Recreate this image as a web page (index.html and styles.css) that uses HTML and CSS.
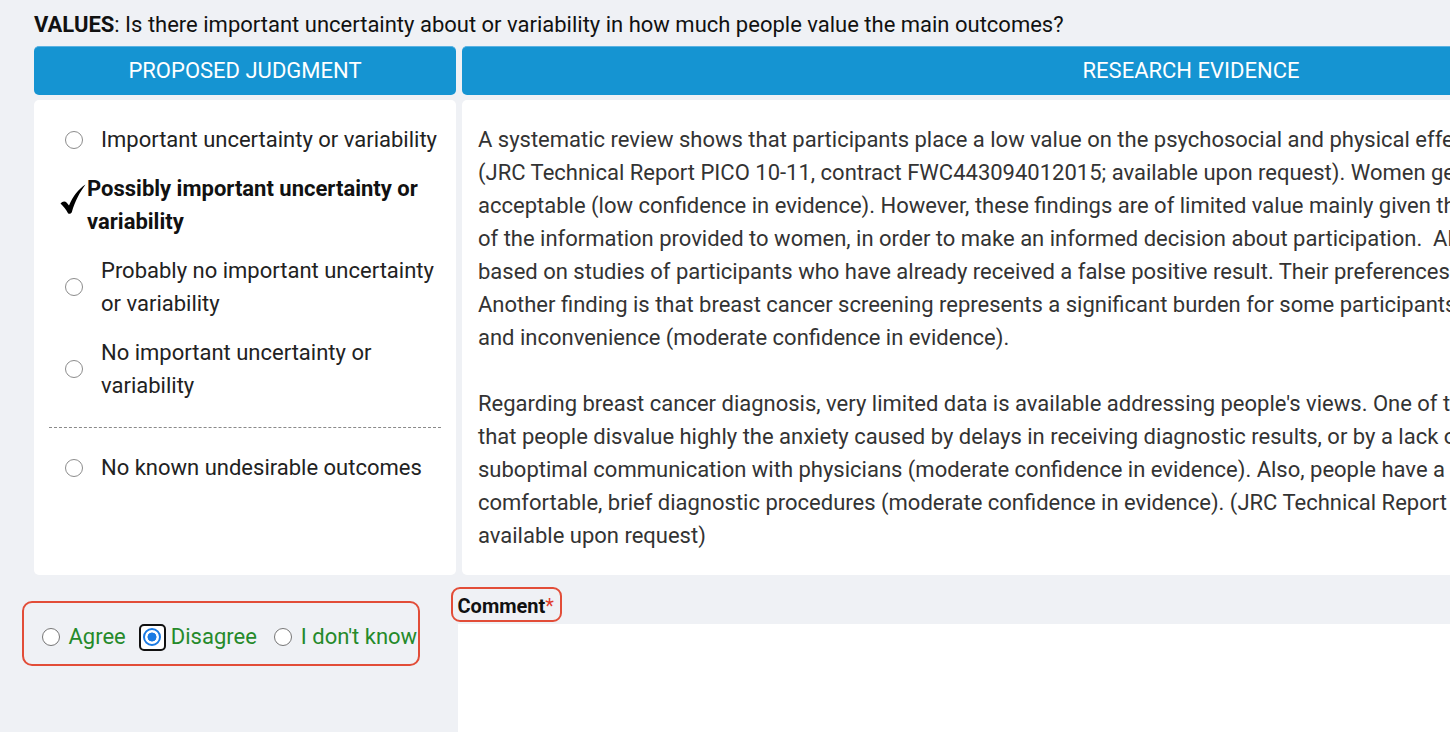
FILE: index.html
```html
<!DOCTYPE html>
<html lang="en">
<head>
<meta charset="utf-8">
<title>Values</title>
<link rel="stylesheet" href="styles.css">
</head>
<body>
<div class="page">
  <h2 class="title"><b>VALUES</b>: Is there important uncertainty about or variability in how much people value the main outcomes?</h2>

  <div class="grid">
    <div class="head">PROPOSED JUDGMENT</div>
    <div class="head">RESEARCH EVIDENCE</div>

    <div class="card judgment">
      <div class="item"><span class="radio"></span><span class="label">Important uncertainty or variability</span></div>
      <div class="item selected">
        <svg class="check" width="26" height="30" viewBox="0 0 26 30"><path d="M0.5 19.5 C2.5 17 5 16.8 6.8 18.8 L9 21.5 C12.8 12.5 18.5 5 25.5 0.5 C20 8 15 17 11.8 28.2 C11.3 29.6 9.2 30.2 8 29.2 C6 25.6 3.5 22.3 0.5 19.5 Z" fill="#000"/></svg>
        <span class="label">Possibly important uncertainty or variability</span>
      </div>
      <div class="item"><span class="radio"></span><span class="label">Probably no important uncertainty or variability</span></div>
      <div class="item"><span class="radio"></span><span class="label">No important uncertainty or variability</span></div>
      <div class="sep"></div>
      <div class="item"><span class="radio"></span><span class="label">No known undesirable outcomes</span></div>
    </div>

    <div class="card evidence">
      <p>A systematic review shows that participants place a low value on the psychosocial and physical effects of false positive results of screening and on the short-term anxiety<br>
      (JRC Technical Report PICO 10-11, contract FWC443094012015; available upon request). Women generally consider the harms of screening to be<br>
      acceptable (low confidence in evidence). However, these findings are of limited value mainly given the uncertainty about the quality and completeness<br>
      of the information provided to women, in order to make an informed decision about participation.&nbsp; Also, most of the evidence is<br>
      based on studies of participants who have already received a false positive result. Their preferences may differ from those of women<br>
      Another finding is that breast cancer screening represents a significant burden for some participants in terms of pain, time<br>
      and inconvenience (moderate confidence in evidence).</p>
      <p>Regarding breast cancer diagnosis, very limited data is available addressing people's views. One of the main findings is<br>
      that people disvalue highly the anxiety caused by delays in receiving diagnostic results, or by a lack of information, or by<br>
      suboptimal communication with physicians (moderate confidence in evidence). Also, people have a preference for<br>
      comfortable, brief diagnostic procedures (moderate confidence in evidence). (JRC Technical Report PICO 12, contract FWC443094012015;<br>
      available upon request)</p>
    </div>
  </div>

  <div class="bottom">
    <div class="vote-col">
      <div class="choices">
        <label class="opt"><span class="radio small"></span><span class="opt-text">Agree</span></label>
        <label class="opt focused"><span class="ring"><span class="radio small checked"></span></span><span class="opt-text">Disagree</span></label>
        <label class="opt"><span class="radio small"></span><span class="opt-text">I don't know</span></label>
      </div>
    </div>
    <div class="comment-col">
      <div class="comment-label">Comment<span class="req">*</span></div>
      <div class="comment-box"></div>
    </div>
  </div>
</div>
</body>
</html>
```

FILE: styles.css
```css
html, body {
  margin: 0;
  padding: 0;
  overflow: hidden;
  background: #eff1f5;
}

body {
  font-family: Roboto, "Liberation Sans", Arial, sans-serif;
  color: #222;
}

.page {
  width: max-content;
  padding-left: 34px;
}

.title {
  margin: 0 0 5px 0;
  padding-top: 8px;
  font-size: 22px;
  line-height: 33px;
  font-weight: 400;
  color: #111;
}

.title b {
  font-weight: 700;
}

.grid {
  display: grid;
  grid-template-columns: 422px 1458px;
  column-gap: 6px;
  row-gap: 5px;
}

.head {
  height: 49px;
  line-height: 48px;
  background: #1594d2;
  color: #fff;
  text-align: center;
  font-size: 22px;
  border-radius: 5px;
  border-top: 1px solid #5bb2e2;
  box-sizing: border-box;
}

.card {
  background: #fff;
  border-radius: 5px;
  box-sizing: border-box;
}

.judgment {
  padding: 23px 15px;
}

.item {
  display: flex;
  align-items: center;
  padding-left: 11px;
  margin-bottom: 16px;
  font-size: 22px;
  line-height: 33px;
  color: #222;
}

.item .radio {
  margin-left: 5px;
  margin-right: 18px;
}

.radio {
  flex: none;
  width: 18px;
  height: 18px;
  border: 1.5px solid #8c8c8c;
  border-radius: 50%;
  background: #fff;
  box-sizing: border-box;
}

.selected .label {
  font-weight: 700;
  color: #111;
}

.check {
  flex: none;
  margin-right: 1px;
  margin-top: -12px;
}

.sep {
  border-top: 1px dashed #8a8a8a;
  margin: 25px 0 23px 0;
}

.evidence {
  padding: 23px 16px;
  overflow: hidden;
  white-space: nowrap;
  font-size: 22px;
  line-height: 33px;
  color: #333;
}

.evidence p {
  margin: 0 0 33px 0;
}

.evidence p:last-child {
  margin-bottom: 0;
}

.bottom {
  display: flex;
}

.vote-col {
  width: 424px;
  flex: none;
}

.choices {
  margin: 26px 0 0 -12px;
  width: 398px;
  height: 65px;
  box-sizing: border-box;
  border: 2.5px solid #e24d38;
  border-radius: 10px;
  display: flex;
  align-items: center;
  padding: 7px 0 0 17.5px;
}

.opt {
  flex: none;
  white-space: nowrap;
  display: flex;
  align-items: center;
  gap: 9px;
  margin-right: 13px;
  font-size: 22px;
  line-height: 30px;
  color: #258a2a;
}

.opt.focused {
  gap: 5px;
  margin-right: 17px;
}

.radio.small {
  border: 1px solid #767676;
}

.ring {
  display: flex;
  padding: 2.5px;
  border: 2px solid #111;
  border-radius: 5px;
  background: #fff;
}

.radio.checked {
  border: 2px solid #1a7ae3;
  background: radial-gradient(circle, #1a7ae3 0 4.2px, #fff 4.8px);
}

.comment-col {
  flex: none;
  width: 1460px;
}

.comment-label {
  display: inline-flex;
  align-items: center;
  margin: 12px 0 0 -7px;
  height: 35px;
  box-sizing: border-box;
  padding: 2px 6px 0 4.5px;
  border: 2.5px solid #e24d38;
  border-radius: 9px;
  font-size: 20px;
  font-weight: 700;
  color: #111;
}

.req {
  color: #e03b2b;
  font-weight: 400;
}

.comment-box {
  margin-top: 2px;
  height: 240px;
  background: #fff;
}
```
